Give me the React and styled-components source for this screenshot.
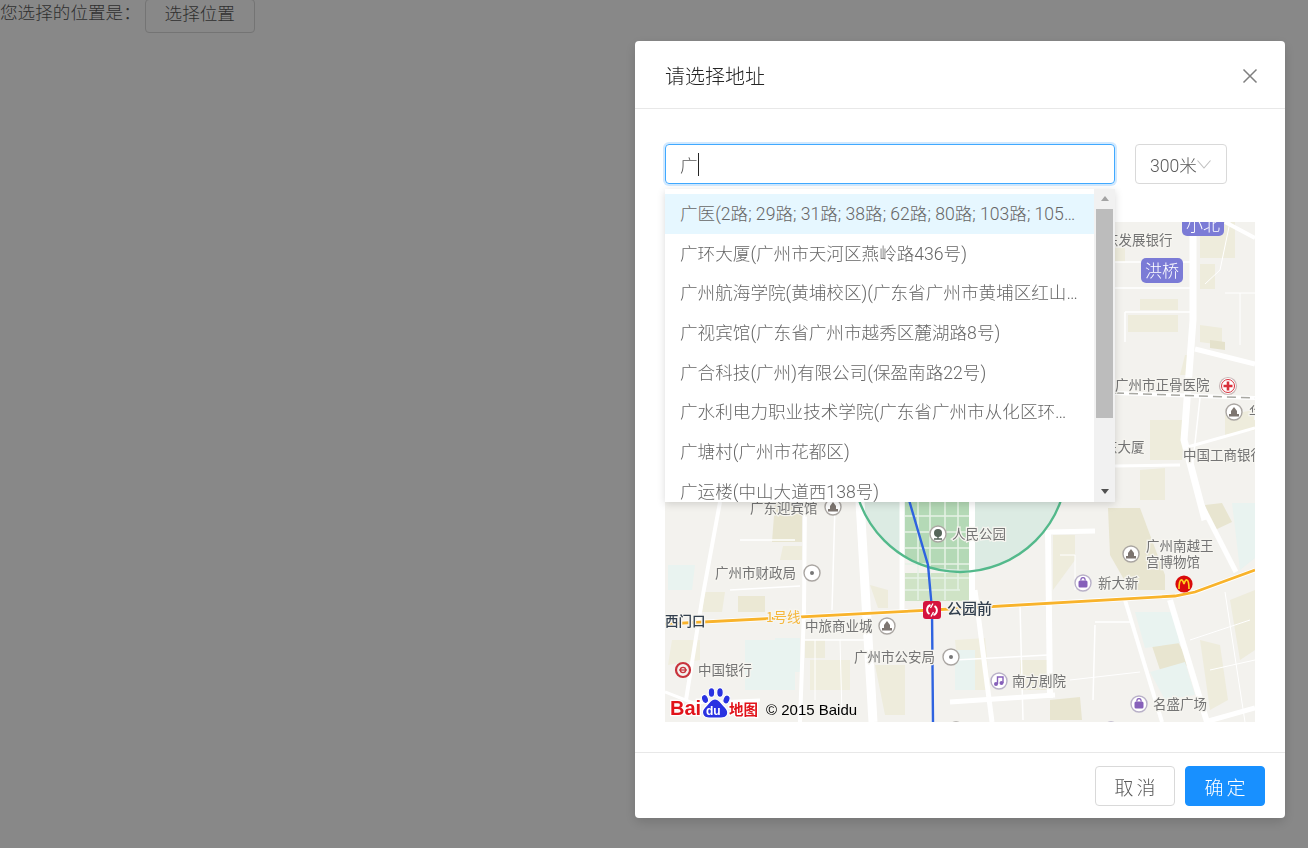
import React from 'react';
import styled, { createGlobalStyle } from 'styled-components';

const GlobalStyle = createGlobalStyle`
  html, body {
    margin: 0;
    height: 100%;
    overflow: hidden;
    background: #fff;
  }
  body {
    font-family: Roboto, "Noto Sans CJK SC", sans-serif;
    font-size: 17.6px;
    font-weight: 300;
    color: #595959;
  }
`;

const TopRow = styled.div`
  display: flex;
  align-items: flex-start;
  height: 34px;
  margin-top: -1px;
  line-height: 28px;
`;

const PickButton = styled.button`
  width: 110px;
  height: 34px;
  margin-left: 4px;
  padding: 0 0 5px;
  background: #fff;
  border: 1px solid #d9d9d9;
  border-radius: 4px;
  font: inherit;
  color: #595959;
`;

const Mask = styled.div`
  position: fixed;
  inset: 0;
  background: rgba(0, 0, 0, 0.465);
  padding: 41px 0 0 635px;
`;

const Modal = styled.div`
  width: 650px;
  background: #fff;
  border-radius: 4px;
  box-shadow: 0 4px 12px rgba(0, 0, 0, 0.15);
`;

const Header = styled.div`
  display: flex;
  align-items: center;
  justify-content: space-between;
  box-sizing: border-box;
  height: 68px;
  padding: 2px 27px 0 30px;
  border-bottom: 1px solid #e8e8e8;
`;

const Title = styled.div`
  font-size: 20px;
  color: #262626;
`;

const Body = styled.div`
  padding: 35px 30px 30px;
`;

const SearchRow = styled.div`
  position: relative;
  display: flex;
  gap: 20px;
  margin-bottom: 38px;
`;

const SearchInput = styled.div`
  display: flex;
  align-items: center;
  box-sizing: border-box;
  width: 450px;
  height: 40px;
  padding-left: 14px;
  border: 1px solid #40a9ff;
  border-radius: 4px;
  box-shadow: 0 0 0 2px rgba(24, 144, 255, 0.2);
`;

const Caret = styled.span`
  width: 1px;
  height: 23px;
  background: #262626;
`;

const RangeSelect = styled.div`
  display: flex;
  align-items: center;
  box-sizing: border-box;
  width: 92px;
  height: 40px;
  padding-left: 14px;
  border: 1px solid #d9d9d9;
  border-radius: 4px;
`;

const Dropdown = styled.div`
  position: absolute;
  z-index: 2;
  top: 45px;
  left: 0;
  display: flex;
  width: 450px;
  height: 313px;
  background: #fff;
  box-shadow: 0 2px 8px rgba(0, 0, 0, 0.15);
  overflow: hidden;
`;

const OptionList = styled.div`
  flex: 1;
  min-width: 0;
  padding-top: 5px;
`;

const Option = styled.div`
  box-sizing: border-box;
  height: 39.7px;
  padding: 0 16px 0 15px;
  line-height: 41.5px;
  white-space: nowrap;
  overflow: hidden;
  text-overflow: ellipsis;
  color: #666;
  background: ${(props) => (props.$active ? '#e6f7ff' : 'transparent')};
`;

const ScrollTrack = styled.div`
  display: flex;
  flex-direction: column;
  align-items: center;
  justify-content: space-between;
  width: 21px;
  background: #f1f1f1;
`;

const ScrollArrow = styled.div`
  width: 0;
  height: 0;
  margin: 7px 0 8px;
  border-left: 4.5px solid transparent;
  border-right: 4.5px solid transparent;
  border-${(props) => (props.$down ? 'top' : 'bottom')}: 5px solid
    ${(props) => (props.$down ? '#505050' : '#a3a3a3')};
`;

const ScrollThumb = styled.div`
  width: 17px;
  height: 209px;
  background: #bcbcbc;
  margin-bottom: auto;
`;

const MapFrame = styled.div`
  width: 590px;
  height: 500px;
  overflow: hidden;
`;

const MapSvg = styled.svg`
  display: block;
  filter: blur(0.35px);
`;

const Footer = styled.div`
  display: flex;
  justify-content: flex-end;
  gap: 10px;
  padding: 13px 20px 12px;
  border-top: 1px solid #e8e8e8;
`;

const FooterButton = styled.button`
  width: 80px;
  height: 40px;
  padding: 0;
  border-radius: 4px;
  font: inherit;
  font-size: 19px;
  letter-spacing: 3px;
  text-indent: 3px;
  border: 1px solid ${(props) => (props.$primary ? '#1890ff' : '#d9d9d9')};
  background: ${(props) => (props.$primary ? '#1890ff' : '#fff')};
  color: ${(props) => (props.$primary ? '#fff' : '#595959')};
`;

const options = [
  '广医(2路; 29路; 31路; 38路; 62路; 80路; 103路; 105路; 107路; 183路)',
  '广环大厦(广州市天河区燕岭路436号)',
  '广州航海学院(黄埔校区)(广东省广州市黄埔区红山三路101号)',
  '广视宾馆(广东省广州市越秀区麓湖路8号)',
  '广合科技(广州)有限公司(保盈南路22号)',
  '广水利电力职业技术学院(广东省广州市从化区环市东路)',
  '广塘村(广州市花都区)',
  '广运楼(中山大道西138号)',
];

const blocks = [
  ['1115,248 1125,248 1125,262 1115,262', '#eeecdd'],
  ['1200,222 1235,222 1235,258 1200,258', '#eeecdc'],
  ['1200,264 1215,264 1215,289 1200,289', '#eeecdc'],
  ['1140,299 1178,299 1178,310 1140,310', '#eeecdc'],
  ['1128,315 1178,315 1178,332 1128,332', '#eeecdc'],
  ['1200,325 1222,328 1222,345 1200,342', '#eeecdc'],
  ['1210,340 1225,342 1225,350 1210,348', '#e5e2cc'],
  ['1185,355 1193,355 1190,375 1180,375', '#eeecdc'],
  ['1150,420 1185,420 1182,460 1150,460', '#eeecdc'],
  ['1225,415 1255,410 1255,430 1225,435', '#eeecdc'],
  ['1140,470 1165,468 1165,500 1140,500', '#eeecdc'],
  ['775,502 802,502 802,542 772,542', '#e8e5d0'],
  ['783,546 802,546 802,560 780,560', '#eeecdc'],
  ['705,592 725,592 722,612 702,612', '#eeecdc'],
  ['738,596 765,596 765,612 738,612', '#ebe8d4'],
  ['672,640 700,640 700,660 668,665', '#f0eedf'],
  ['805,640 825,640 825,658 805,658', '#eeecdc'],
  ['870,585 888,590 888,608 878,608', '#eeecdc'],
  ['1108,508 1140,508 1165,575 1165,590 1130,590 1110,555', '#e8e5d0'],
  ['1053,535 1075,535 1075,560 1053,590', '#eeecdc'],
  ['1205,505 1222,503 1232,522 1215,530', '#e8e5d0'],
  ['1020,660 1050,660 1050,690 1020,690', '#eeecdc'],
  ['1150,640 1176,638 1190,665 1160,670', '#e8e5d0'],
  ['1200,640 1220,645 1228,700 1210,710', '#eeecdc'],
  ['1230,600 1255,590 1255,650 1240,660', '#eeecdc'],
  ['1050,700 1080,697 1082,720 1050,720', '#e8e5d0'],
  ['955,640 985,638 990,690 960,690', '#f0eedf'],
  ['875,665 905,665 905,715 885,715', '#eeecdc'],
  ['810,660 850,660 850,690 810,690', '#f0eedf'],
  ['975,580 1048,580 1048,600 975,605', '#f3f1ec'],
];

const waters = [
  ['668,565 695,565 692,590 668,590'],
  ['745,640 795,640 795,690 745,690'],
  ['775,638 800,638 800,672 775,672'],
  ['1135,612 1172,612 1180,643 1145,648'],
  ['1150,672 1185,662 1195,695 1165,700'],
  ['1232,503 1255,503 1255,558 1240,570'],
  ['955,650 975,650 975,690 955,690'],
];

const roads = [
  ['M1193 222 L1193 320 L1184 440 L1205 520', 7],
  ['M1195 349 L1255 364', 5],
  ['M1115 466 L1180 465', 3],
  ['M1184 448 L1255 428', 3],
  ['M1225 222 L1255 238', 4],
  ['M1115 288 L1190 288', 1.5],
  ['M1125 312 L1190 312', 1.5],
  ['M1125 312 L1125 342', 1.5],
  ['M1115 262 L1190 262', 1.5],
  ['M1205 284 L1220 270 L1230 222', 1],
  ['M1225 293 L1255 293', 1],
  ['M1240 293 L1240 345', 1],
  ['M1200 398 L1192 470', 1.5],
  ['M720 502 L702 600 L686 700', 4],
  ['M805 502 L804 610 L800 722', 4],
  ['M860 502 L873 722', 9],
  ['M902 502 L902 610', 5],
  ['M972 502 L972 610', 6],
  ['M665 692 L693 703 L760 700', 3],
  ['M1048 530 L1050 698', 6],
  ['M1050 532 L1095 531', 5],
  ['M1125 600 L1162 722', 4],
  ['M1170 600 L1207 722', 6],
  ['M1200 502 L1236 572', 5],
  ['M950 702 L1055 695', 5],
  ['M1205 722 L1255 708', 5],
  ['M975 590 L992 722', 5],
  ['M1020 605 L1023 720', 1.5],
  ['M955 660 L1048 655', 1.5],
  ['M1095 625 L1093 700', 1.5],
  ['M1095 622 L1130 622', 1.5],
  ['M1225 592 L1245 722', 1],
  ['M1190 640 L1250 620', 1],
  ['M1210 670 L1255 660', 1],
  ['M1070 680 L1140 672', 1],
  ['M835 505 L832 610', 1.5],
  ['M740 540 L795 540', 1.5],
  ['M730 590 L800 586', 1.5],
  ['M805 640 L870 640', 1.5],
  ['M815 640 L815 700', 1],
  ['M840 640 L842 715', 1],
  ['M1060 555 L1075 555 L1075 590', 1],
];

const parkLines =
  'M905 516H970M905 532H970M905 548H970M905 564H970M905 578H970M905 590H960M918 502V600M930 502V600M945 502V600M958 502V590';

const labels = [
  ['东发展银行', 1105, 245],
  ['广州市正骨医院', 1115, 390],
  ['华', 1249, 417],
  ['东大厦', 1104, 452],
  ['中国工商银行', 1183, 460],
  ['广东迎宾馆', 750, 513],
  ['人民公园', 952, 539],
  ['广州南越王', 1146, 551],
  ['宫博物馆', 1146, 567],
  ['广州市财政局', 715, 578],
  ['新大新', 1098, 588],
  ['中旅商业城', 805, 631],
  ['广州市公安局', 854, 662],
  ['中国银行', 698, 675],
  ['南方剧院', 1012, 686],
  ['名盛广场', 1153, 709],
];

const MapLabel = styled.text`
  font-family: "Noto Sans CJK SC", sans-serif;
  font-size: 13.5px;
  font-weight: 400;
  fill: ${(props) => props.$fill || '#747474'};
  stroke: #f6f5f0;
  stroke-width: 2.5px;
  paint-order: stroke;
`;

const BadgeLabel = styled.text`
  font-family: "Noto Sans CJK SC", sans-serif;
  font-size: 17px;
  fill: #fff;
`;

const LogoMark = styled.text`
  font-family: ${(props) => props.$font || '"Noto Sans CJK SC"'}, sans-serif;
  font-size: ${(props) => props.$size}px;
  font-weight: 700;
  fill: ${(props) => props.$fill || '#e1131a'};
  stroke: ${(props) => (props.$halo ? '#fff' : 'none')};
  stroke-width: 2.5px;
  paint-order: stroke;
`;

const PoiRing = ({ x, y, ring = '#aaa6a2' }) => (
  <circle cx={x} cy={y} r="8" fill="#fff" stroke={ring} strokeWidth="1.4" />
);

const BuildingPoi = ({ x, y }) => (
  <g>
    <PoiRing x={x} y={y} />
    <path
      d={`M${x} ${y - 5} L${x + 3} ${y - 1} V${y + 2} H${x + 5} V${y + 4.5} H${x - 5} V${y + 2} H${x - 3} V${y - 1} Z`}
      fill="#7d7570"
    />
  </g>
);

const DotPoi = ({ x, y }) => (
  <g>
    <PoiRing x={x} y={y} />
    <circle cx={x} cy={y} r="2" fill="#777" />
  </g>
);

const TreePoi = ({ x, y }) => (
  <g>
    <PoiRing x={x} y={y} />
    <circle cx={x} cy={y - 1} r="4" fill="#56655a" />
    <path d={`M${x} ${y} V${y + 5} M${x - 4} ${y + 5} H${x + 4}`} stroke="#56655a" strokeWidth="1.4" />
  </g>
);

const ShopPoi = ({ x, y }) => (
  <g>
    <PoiRing x={x} y={y} ring="#b9b1c8" />
    <rect x={x - 4.5} y={y - 2.5} width="9" height="7" rx="1.5" fill="#8660ba" />
    <path d={`M${x - 2.2} ${y - 2.5} a2.2 2.8 0 0 1 4.4 0`} fill="none" stroke="#8660ba" strokeWidth="1.2" />
  </g>
);

const MusicPoi = ({ x, y }) => (
  <g>
    <PoiRing x={x} y={y} ring="#b9b1c8" />
    <path d={`M${x - 1.5} ${y + 3} V${y - 4} H${x + 4} V${y + 2}`} fill="none" stroke="#8660ba" strokeWidth="1.4" />
    <circle cx={x - 3} cy={y + 3} r="2" fill="#8660ba" />
    <circle cx={x + 2.5} cy={y + 2} r="2" fill="#8660ba" />
  </g>
);

const BaiduLogo = () => (
  <g>
    <LogoMark x="670" y="715" $font="Liberation Sans" $size={20} $halo>Bai</LogoMark>
    <g fill="#2932e1" stroke="#fff" strokeWidth="1.2">
      <ellipse cx="705" cy="699" rx="3.4" ry="4.6" transform="rotate(-20 705 699)" />
      <ellipse cx="711.5" cy="692.5" rx="3.3" ry="4.8" />
      <ellipse cx="720" cy="692.5" rx="3.3" ry="4.8" />
      <ellipse cx="726.5" cy="699.5" rx="3.4" ry="4.6" transform="rotate(20 726.5 699.5)" />
      <path d="M715 699 C710 699 709 704 705 707 C700 712 703 718 709 718 L721 718 C728 718 730 712 725 707 C721 704 720 699 715 699 Z" />
    </g>
    <LogoMark x="706" y="715" $font="Liberation Sans" $size={12} $fill="#fff">du</LogoMark>
    <LogoMark x="729" y="715" $size={14.5} $halo>地图</LogoMark>
    <text x="766" y="715" fontFamily="Liberation Sans" fontSize="15" fill="#000">© 2015 Baidu</text>
  </g>
);

const CityMap = () => (
  <MapSvg width="590" height="500" viewBox="665 222 590 500">
    <rect x="665" y="222" width="590" height="500" fill="#f3f2ee" />
    {blocks.map(([points, fill]) => (
      <polygon key={points} points={points} fill={fill} />
    ))}
    {waters.map(([points]) => (
      <polygon key={points} points={points} fill="#e9f3f0" />
    ))}
    <rect x="905" y="573" width="65" height="28" fill="#cfe3c6" />
    <circle cx="960" cy="465" r="107" fill="#dcebe3" />
    <path d="M905 502 H970 V570 L930 568 L905 558 Z" fill="#b4d9b6" />
    <path d={parkLines} stroke="#e6f2e6" strokeWidth="1.5" />
    {roads.map(([d, width]) => (
      <path key={d} d={d} fill="none" stroke="#fff" strokeWidth={width} />
    ))}
    <circle cx="960" cy="465" r="107" fill="none" stroke="#53b98b" strokeWidth="2.4" />
    <path d="M1115 393 L1255 398" stroke="#fff" strokeWidth="4" />
    <path d="M1115 393 L1255 398" stroke="#a8a8a2" strokeWidth="1.6" strokeDasharray="9 5" />
    <path d="M665 624 L932 610 L1175 596 L1195 592 L1255 570" fill="none" stroke="#fff" strokeWidth="4.5" />
    <path d="M665 624 L932 610 L1175 596 L1195 592 L1255 570" fill="none" stroke="#f8b32b" strokeWidth="2.8" />
    <path d="M909 500 L928 565 L932 610 L933 722" fill="none" stroke="#2e63e0" strokeWidth="2.4" />

    <rect x="1182" y="208" width="42" height="28" rx="5" fill="#7b7bd6" />
    <BadgeLabel x="1186" y="231">小北</BadgeLabel>
    <rect x="1141" y="258" width="42" height="25" rx="5" fill="#7b7bd6" />
    <BadgeLabel x="1145" y="277">洪桥</BadgeLabel>

    {labels.map(([text, x, y]) => (
      <MapLabel key={text} x={x} y={y}>{text}</MapLabel>
    ))}
    <MapLabel x={766} y={622} $fill="#f5b73d">1号线</MapLabel>
    <MapLabel x={665} y={626} $fill="#33404f" style={{ fontWeight: 500 }}>西门口</MapLabel>
    <MapLabel x={947} y={614} $fill="#33404f" style={{ fontWeight: 500, fontSize: 15 }}>公园前</MapLabel>

    <circle cx="1228" cy="386" r="8.5" fill="#fff" stroke="#c9b8b8" strokeWidth="1.2" />
    <circle cx="1228" cy="386" r="6.5" fill="#fff" stroke="#d92f3a" strokeWidth="1" />
    <path d="M1228 381.5V390.5M1223.5 386H1232.5" stroke="#d92f3a" strokeWidth="2.6" />
    <BuildingPoi x={1234} y={412} />
    <BuildingPoi x={833} y={507} />
    <TreePoi x={938} y={534} />
    <BuildingPoi x={1131} y={554} />
    <DotPoi x={812} y={573} />
    <BuildingPoi x={887} y={626} />
    <DotPoi x={951} y={657} />
    <ShopPoi x={1083} y={583} />
    <ShopPoi x={1139} y={704} />
    <MusicPoi x={999} y={681} />
    <DotPoi x={956} y={730} />
    <ShopPoi x={1111} y={730} />

    <circle cx="683" cy="670" r="7" fill="none" stroke="#c8333c" strokeWidth="2.2" />
    <circle cx="683" cy="670" r="2.6" fill="none" stroke="#c8333c" strokeWidth="1.4" />
    <path d="M679 670H687" stroke="#c8333c" strokeWidth="1.2" />

    <circle cx="1184" cy="584" r="8.6" fill="#d90b0b" />
    <path d="M1179 589 C1179 578 1182.5 578 1184 584 C1185.5 578 1189 578 1189 589" fill="none" stroke="#ffd21f" strokeWidth="1.7" />

    <rect x="923" y="601" width="18" height="18" rx="3" fill="#d5133d" />
    <path d="M930.5 605 a5 5 0 0 0 -1 9 M933.5 615 a5 5 0 0 0 1 -9" fill="none" stroke="#fff" strokeWidth="1.9" />
    <path d="M933 603.5 L930.5 608 M931 616.5 L933.5 612" fill="none" stroke="#fff" strokeWidth="1.3" />

    <BaiduLogo />
  </MapSvg>
);

const App = () => (
  <>
    <GlobalStyle />
    <TopRow>
      您选择的位置是：
      <PickButton>选择位置</PickButton>
    </TopRow>
    <Mask>
      <Modal>
        <Header>
          <Title>请选择地址</Title>
          <svg width="16" height="16" viewBox="0 0 16 16">
            <path d="M1.5 1.5L14.5 14.5M14.5 1.5L1.5 14.5" stroke="#7f7f7f" strokeWidth="1.5" />
          </svg>
        </Header>
        <Body>
          <SearchRow>
            <SearchInput>
              广
              <Caret />
            </SearchInput>
            <RangeSelect>
              300米
              <svg width="14" height="9" viewBox="0 0 14 9">
                <path d="M0.5 0.5L7 8L13.5 0.5" fill="none" stroke="#bfbfbf" strokeWidth="1.1" />
              </svg>
            </RangeSelect>
            <Dropdown>
              <OptionList>
                {options.map((option, index) => (
                  <Option key={option} $active={index === 0}>{option}</Option>
                ))}
              </OptionList>
              <ScrollTrack>
                <ScrollArrow />
                <ScrollThumb />
                <ScrollArrow $down />
              </ScrollTrack>
            </Dropdown>
          </SearchRow>
          <MapFrame>
            <CityMap />
          </MapFrame>
        </Body>
        <Footer>
          <FooterButton>取消</FooterButton>
          <FooterButton $primary>确定</FooterButton>
        </Footer>
      </Modal>
    </Mask>
  </>
);

export default App;
